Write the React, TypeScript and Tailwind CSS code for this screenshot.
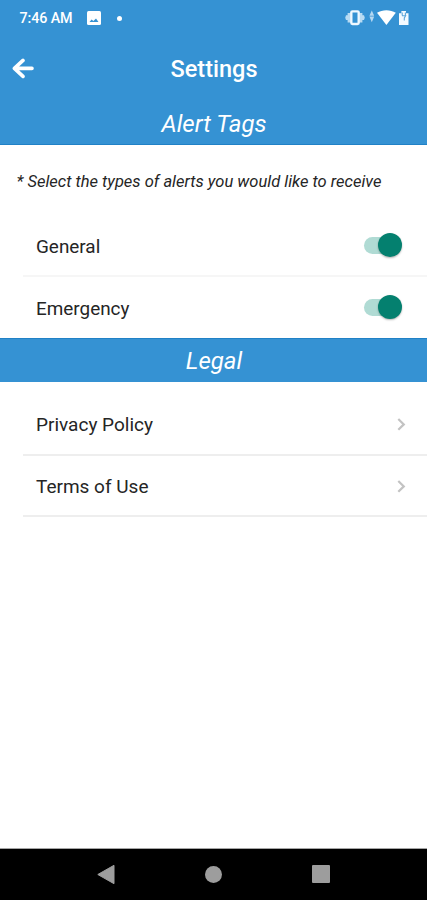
import React from "react";

function StatusBar() {
  return (
    <div className="flex h-9 items-center pl-[19.5px] pr-[18px] text-white">
      <span className="w-[54px] whitespace-nowrap pt-[2px] text-[14.3px] font-medium tracking-[-0.1px]">7:46 AM</span>
      <svg className="ml-[13.5px] h-[14px] w-[14px]" viewBox="0 0 14 14">
        <rect width="14" height="14" rx="1.5" fill="#fff" />
        <path d="M2.5 11L4.6 8.6L6.4 10L9 7.6L11.5 11Z" fill="#3592d3" />
      </svg>
      <span className="ml-[15.5px] h-[5px] w-[5px] rounded-full bg-white" />
      <svg className="ml-auto h-4 w-[64px]" viewBox="345 10 64 16">
        <path d="M350.5 13H347.6V15.3H346L345.2 17.7L346 20.1H347.6V22.5H350.5ZM359.5 13H362.4V15.3H364L364.8 17.7L364 20.1H362.4V22.5H359.5Z" fill="#b8dbf3" />
        <rect x="351.3" y="11.4" width="7.4" height="12.6" rx="1.2" fill="#3592d3" stroke="#eef8ff" strokeWidth="2.4" />
        <path d="M369.4 15.8L371.8 10.5L374.2 15.8ZM369.4 16.6L371.8 22.3L374.2 16.6Z" fill="#b5d8f1" />
        <path d="M377 12.8C382.4 9.3 390.4 9.3 395.8 12.8L386.4 25Z" fill="#fff" />
        <path d="M399 13.2H401.4V11H406V13.2H408.5V25H399Z" fill="#f3faff" />
        <path d="M402.2 12.5V15.6M405.4 12.5V15.6M402 15.8H405.6L404.3 18V20.5" fill="none" stroke="#5da7da" strokeWidth="1.1" />
      </svg>
    </div>
  );
}

function Header() {
  return (
    <header className="grid h-[66px] grid-cols-[57px_1fr_57px] items-center text-white">
      <svg className="ml-[12px] h-[22px] w-[23px]" viewBox="0 0 23 22" fill="none" stroke="#fff" strokeWidth="3.6">
        <path d="M11 2.4L2.4 10.4L11 18.4M3 10.4H20" strokeLinejoin="round" strokeLinecap="round" />
      </svg>
      <h1 className="pl-[1px] text-center text-[23.5px] font-medium leading-7">Settings</h1>
    </header>
  );
}

function SectionTitle({ children }: { children: React.ReactNode }) {
  return (
    <h2 className="flex h-11 items-center justify-center border-t border-[#2081c6] bg-[#3592d3] pl-[1px] pt-[1px] text-[24px] italic text-white">
      {children}
    </h2>
  );
}

function AlertRow({ label, divider }: { label: string; divider?: boolean }) {
  return (
    <div className="ml-[23px] h-[62px]">
      <div className="flex h-[61px] items-center justify-between pl-[13px] pr-[25px]">
        <span className="pt-[5px] text-[18.9px]">{label}</span>
        <button role="switch" aria-checked="true" aria-label={label} className="mt-[1px] flex h-[24px] w-[38px] items-center">
          <span className="flex h-[17px] w-[37px] items-center justify-end rounded-full bg-[#b0dbd4]">
            <span className="-mr-[1px] h-[24px] w-[24px] shrink-0 rounded-full bg-[#04806f] shadow-[0_1px_2px_rgba(0,0,0,0.3)]" />
          </span>
        </button>
      </div>
      {divider && <div className="h-[2px] bg-[#f6f6f6]" />}
    </div>
  );
}

function LinkRow({ label }: { label: string }) {
  return (
    <div className="ml-[23px] flex h-[61.5px] items-center justify-between border-b-2 border-[#eeeeee] pl-[13px] pr-[21px]">
      <span className="pt-[3px] text-[19px]">{label}</span>
      <svg className="h-[14px] w-[9px]" viewBox="0 0 9 14" fill="none" stroke="#c3c3c3" strokeWidth="2.2">
        <path d="M1.3 2L6.8 7.4L1.3 12.8" />
      </svg>
    </div>
  );
}

export default function App() {
  return (
    <div className="flex h-[900px] w-[427px] flex-col overflow-hidden bg-white font-['Roboto',sans-serif] text-[#252525]">
      <div className="h-[145px] border-b border-[#2081c6] bg-[#3592d3]">
        <StatusBar />
        <Header />
        <h2 className="flex h-[42px] items-center justify-center pl-[1px] pt-[2px] text-[24px] italic text-white">Alert Tags</h2>
      </div>
      <p className="h-[69px] whitespace-nowrap pl-[16.5px] pt-[24.5px] text-[16.5px] italic leading-6">
        * Select the types of alerts you would like to receive
      </p>
      <AlertRow label="General" divider />
      <AlertRow label="Emergency" />
      <SectionTitle>Legal</SectionTitle>
      <div className="pt-[12.4px]">
        <LinkRow label="Privacy Policy" />
        <LinkRow label="Terms of Use" />
      </div>
      <nav className="mt-auto grid h-[52px] grid-cols-3 items-center border-t border-[#a5a5a5] bg-black px-[53px]">
        <svg className="mr-[2px] h-5 w-[18px] justify-self-center" viewBox="0 0 18 20">
          <path d="M.8 9.5L17 .3V18.7Z" fill="#9d9d9d" stroke="#9d9d9d" strokeWidth="1" strokeLinejoin="round" />
        </svg>
        <span className="h-[17px] w-[17px] justify-self-center rounded-full bg-[#9d9d9d]" />
        <span className="mb-[1px] h-[18px] w-[18px] justify-self-center rounded-[1px] bg-[#9d9d9d]" />
      </nav>
    </div>
  );
}
